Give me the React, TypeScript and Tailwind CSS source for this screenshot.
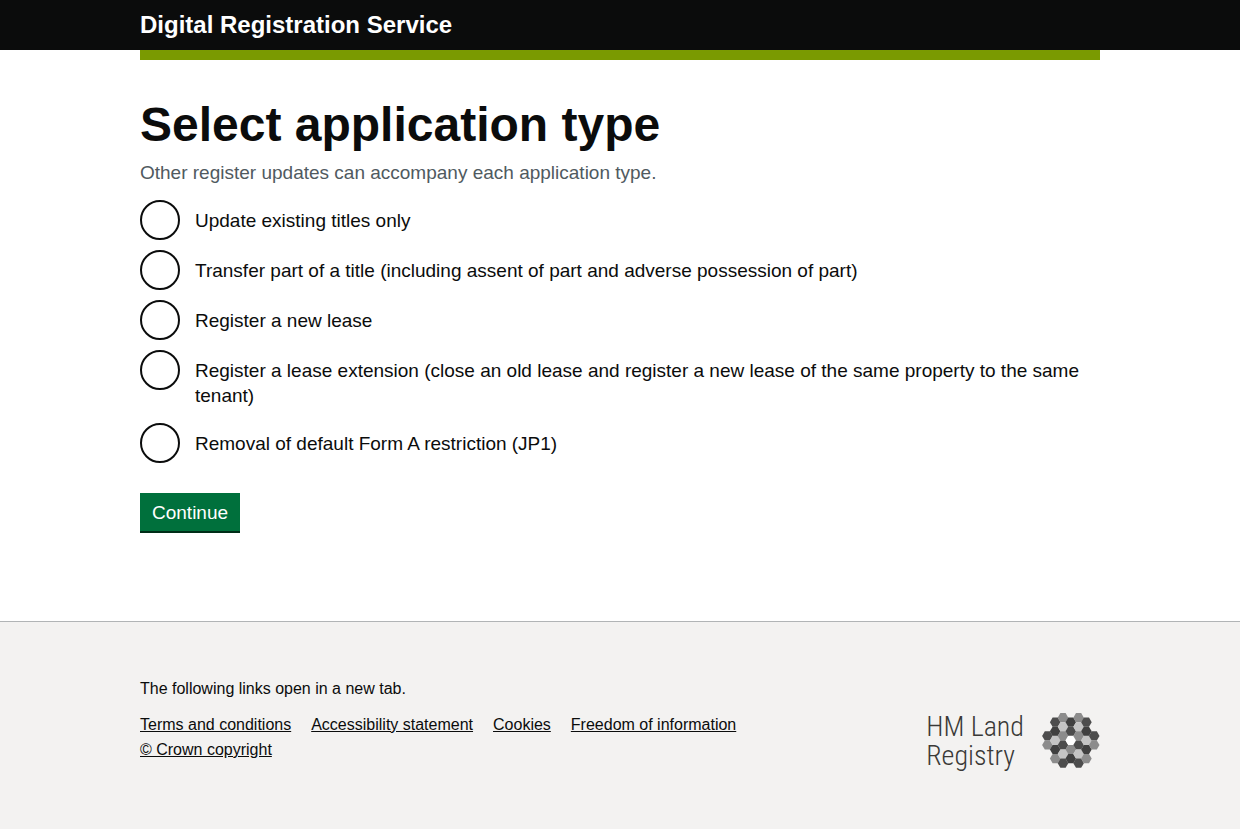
const options = [
  { value: "update", label: "Update existing titles only" },
  { value: "transfer", label: "Transfer part of a title (including assent of part and adverse possession of part)" },
  { value: "lease", label: "Register a new lease" },
  {
    value: "extension",
    label:
      "Register a lease extension (close an old lease and register a new lease of the same property to the same tenant)",
  },
  { value: "removal", label: "Removal of default Form A restriction (JP1)" },
];

const footerLinks = [
  "Terms and conditions",
  "Accessibility statement",
  "Cookies",
  "Freedom of information",
  "© Crown copyright",
];

const D = "#4d4d4d";
const K = "#404040";
const G = "#8c8c8c";
const L = "#c4c4c4";
const W = "#ffffff";

// Each column lists its cell colours from top to bottom; cells are 9.1 units apart.
const columns = [
  { x: 5.4, y: 22.9, cells: [D, G] },
  { x: 13.2, y: 9.2, cells: [D, K, L, K, G] },
  { x: 21, y: 4.7, cells: [G, L, G, D, L, D] },
  { x: 28.8, y: 9.2, cells: [K, D, W, G, K] },
  { x: 36.6, y: 4.7, cells: [G, L, G, D, L, D] },
  { x: 44.4, y: 9.2, cells: [D, K, L, K, G] },
  { x: 52.2, y: 22.9, cells: [D, G] },
];

function hexagon(cx: number, cy: number) {
  return [
    [cx - 5.3, cy],
    [cx - 2.6, cy - 4.6],
    [cx + 2.6, cy - 4.6],
    [cx + 5.3, cy],
    [cx + 2.6, cy + 4.6],
    [cx - 2.6, cy + 4.6],
  ]
    .map((point) => point.join(","))
    .join(" ");
}

function HexEmblem() {
  return (
    <svg viewBox="0 0 58 56" className="h-14 w-[58px]" aria-hidden="true">
      {columns.map((column) =>
        column.cells.map((fill, row) => (
          <polygon
            key={`${column.x}-${row}`}
            points={hexagon(column.x, column.y + row * 9.1)}
            fill={fill}
          />
        )),
      )}
    </svg>
  );
}

export default function App() {
  return (
    <div className="flex min-h-screen flex-col bg-[#f3f2f1] font-['Liberation_Sans',Arial,sans-serif] text-[#0b0c0c]">
      <header className="bg-[#0b0c0c] px-8">
        <div className="mx-auto max-w-[960px] py-2.5">
          <a href="#" className="block text-2xl leading-[30px] font-bold text-white">
            Digital Registration Service
          </a>
        </div>
      </header>
      <div className="bg-white px-8">
        <div className="mx-auto h-2.5 max-w-[960px] bg-[#7a9a01]" />
        <main className="mx-auto max-w-[960px] pt-10 pb-[88px]">
          <form onSubmit={(event) => event.preventDefault()}>
            <fieldset aria-describedby="type-hint">
              <legend>
                <h1 className="text-5xl leading-[50px] font-bold">Select application type</h1>
              </legend>
              <p id="type-hint" className="mt-2.5 mb-[15px] text-[19px] leading-[25px] text-[#505a5f]">
                Other register updates can accompany each application type.
              </p>
              <div className="flex flex-col gap-2.5">
                {options.map((option) => (
                  <div key={option.value} className="flex items-start gap-[15px]">
                    <input
                      type="radio"
                      id={option.value}
                      name="application-type"
                      value={option.value}
                      className="size-10 shrink-0 appearance-none rounded-full border-2 border-[#0b0c0c] bg-white checked:bg-[#0b0c0c] checked:shadow-[inset_0_0_0_8px_white]"
                    />
                    <label htmlFor={option.value} className="pt-2 pb-[5px] text-[19px] leading-[25px]">
                      {option.label}
                    </label>
                  </div>
                ))}
              </div>
            </fieldset>
            <button
              type="submit"
              className="mt-[30px] h-10 border-b-2 border-[#002d18] bg-[#00703c] px-3 text-[19px] leading-[25px] text-white"
            >
              Continue
            </button>
          </form>
        </main>
      </div>
      <footer className="border-t border-[#b1b4b6] px-8 pt-[54px] pb-14">
        <div className="mx-auto flex max-w-[960px] items-start justify-between gap-8">
          <div className="max-w-[640px]">
            <h2 className="mb-[11px] text-base leading-[25px]">The following links open in a new tab.</h2>
            <ul className="flex flex-wrap gap-x-5">
              {footerLinks.map((link) => (
                <li key={link} className="text-base leading-[25px]">
                  <a href="#" target="_blank" rel="noreferrer" className="underline underline-offset-1">
                    {link}
                  </a>
                </li>
              ))}
            </ul>
          </div>
          <div className="flex items-center gap-[18px] pt-9">
            <p className="font-['Roboto_Condensed',Roboto,sans-serif] text-[28px] leading-[29px] font-light text-[#3a3937]">
              <span className="block">HM Land</span>
              <span className="block">Registry</span>
            </p>
            <HexEmblem />
          </div>
        </div>
      </footer>
    </div>
  );
}
